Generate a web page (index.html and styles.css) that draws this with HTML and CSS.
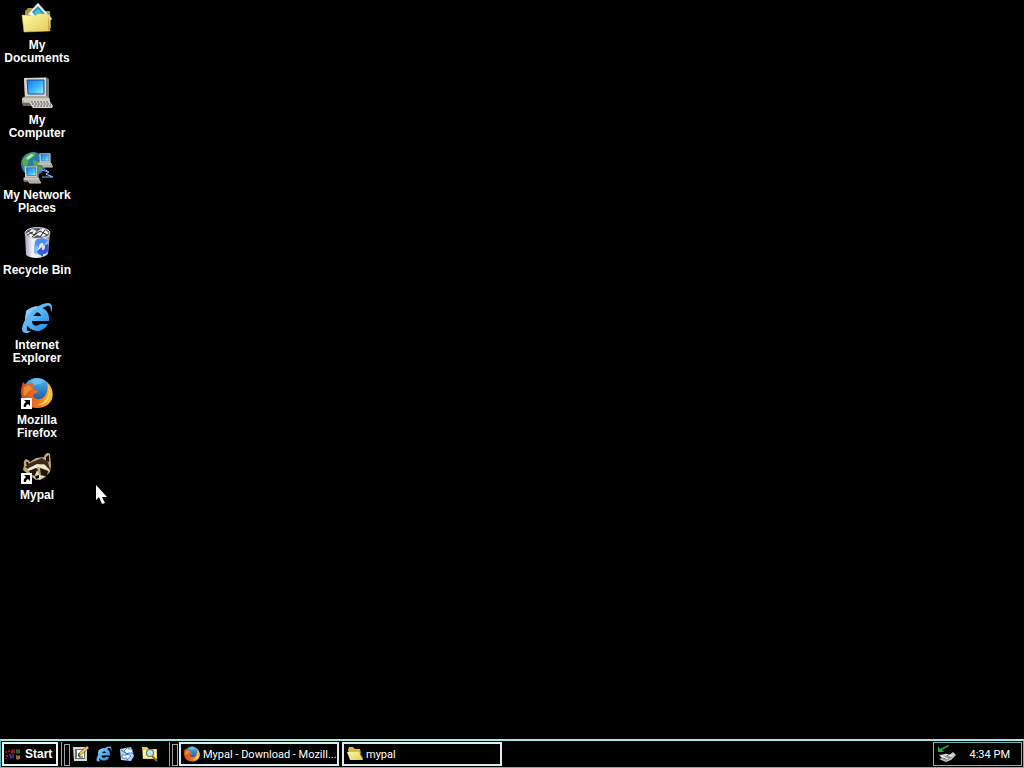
FILE: index.html
```html
<!DOCTYPE html>
<html lang="en">
<head>
<meta charset="utf-8">
<title>Desktop</title>
<link rel="stylesheet" href="styles.css">
</head>
<body>
<svg class="defs" aria-hidden="true">
  <defs>
    <linearGradient id="screen" x1="0" y1="0" x2="1" y2="1"><stop offset="0" stop-color="#1474e0"/><stop offset=".55" stop-color="#39b8ff"/><stop offset="1" stop-color="#a5f0ff"/></linearGradient>
    <linearGradient id="folder" x1="0" y1="0" x2="1" y2="1"><stop offset="0" stop-color="#fff9a8"/><stop offset="1" stop-color="#e2cb5c"/></linearGradient>
    <linearGradient id="bin" x1="0" x2="1"><stop offset="0" stop-color="#a9a6b8"/><stop offset=".3" stop-color="#f4f2fa"/><stop offset=".8" stop-color="#dddbe8"/><stop offset="1" stop-color="#8a879c"/></linearGradient>
    <linearGradient id="blue" x1="0" y1="0" x2="1" y2="1"><stop offset="0" stop-color="#9adcff"/><stop offset=".5" stop-color="#4dafF3"/><stop offset="1" stop-color="#2a83da"/></linearGradient>
    <linearGradient id="flame" x1="0" y1="0" x2="1" y2="0"><stop offset="0" stop-color="#d8481a"/><stop offset=".6" stop-color="#f07a1c"/><stop offset="1" stop-color="#ffc63a"/></linearGradient>
    <linearGradient id="globe" x1="0" y1="0" x2="0" y2="1"><stop offset="0" stop-color="#54b8ee"/><stop offset="1" stop-color="#123c8c"/></linearGradient>
    <symbol id="ie" viewBox="0 0 32 32">
      <path d="M15 5a12 12 0 1 0 12 17h-8c-3 3-8 2-8-3h17C29 10 24 5 15 5zM11 14c1-5 8-5 9 0z" fill="url(#blue)" fill-rule="evenodd"/>
      <path d="M30 11c2-6 1-10-3-10C16 1 2 16 1 27c0 5 5 5 10 2-4 1-6 0-5-4C8 17 17 7 26 4c3-1 4 1 4 7z" fill="#63b6f3"/>
      <path d="M5 9C8 6 13 4 18 4l-8 5-6 8z" fill="#8bcdf8"/>
    </symbol>
    <symbol id="firefox" viewBox="0 0 32 32">
      <circle cx="16" cy="15" r="14" fill="url(#globe)"/>
      <path d="M10 4c5-4 10-3 14 0l-5 3-6 1z" fill="#7accf5" opacity=".6"/>
      <path d="M2 5l3 3c2-1 5-2 8-1-2 2-2 4 0 6l4 1c-1 3-5 2-5 5 2 4 8 4 11 1 4-4 4-10 3-15 10 9 7 26-10 26C1 31-3 17 2 5z" fill="url(#flame)"/>
      <path d="M26 6c4 8 2 18-9 22 11 1 15-13 9-22z" fill="#ffe05a"/>
      <path d="M3 10l5-2 4 4-4 2-4 5c-2-2-2-6-1-9z" fill="#f08a32"/>
    </symbol>
    <symbol id="pc" viewBox="0 0 32 32">
      <path d="M3 1l22-1 3 2v19l-3 2H4z" fill="#77747c"/>
      <path d="M3 1h22v20H4z" fill="#ddd9ce"/>
      <path d="M6 3h17v14H7z" fill="url(#screen)" stroke="#174c91"/>
      <path d="M1 21l4-2h21l3 3v4H1z" fill="#aaa6a0"/>
      <path d="M1 22h27M3 24h10" stroke="#f2eddf"/>
      <path d="M8 26l2-3h18l4 6-1 2H12z" fill="#d3d0c9"/>
      <path d="M10 25h18M11 27h19M13 29h17" stroke="#5e5b5b" stroke-dasharray="2 1"/>
      <path d="M1 26h7l2 3H2z" fill="#6b6864"/>
    </symbol>
    <symbol id="shortcut" viewBox="0 0 11 11">
      <path d="M0 0h11v11H0z" fill="#fff"/>
      <path d="M3 2h6v6L7 6C5 7 5 8 5 9H3C2 7 3 6 5 4z" fill="#000"/>
    </symbol>
  </defs>
</svg>

<main class="desktop">
  <button class="shortcut">
    <svg class="icon" viewBox="0 0 32 32" aria-hidden="true">
      <path d="M4 9l3-3h7l3 3h12l1 17H4z" fill="#a99739"/>
      <path d="M7 12L17 1l14 16-8 5z" fill="#f5f7ff" stroke="#aab0c0" stroke-width=".5"/>
      <path d="M11 10l6-6 7 8-7 5z" fill="#2b94d0"/>
      <path d="M13 11l4-4 4 5-4 4z" fill="#54c5b5"/>
      <path d="M1 13l13 1 3-2h9l3 2 0 15-26 1z" fill="url(#folder)" stroke="#dfce64" stroke-width=".5"/>
      <path d="M27 13l2 15-2 1z" fill="#c5ab45"/>
    </svg>
    <span class="label">My Documents</span>
  </button>
  <button class="shortcut">
    <svg class="icon" viewBox="0 0 32 32" aria-hidden="true"><use href="#pc"/></svg>
    <span class="label">My Computer</span>
  </button>
  <button class="shortcut">
    <svg class="icon" viewBox="0 0 32 32" aria-hidden="true">
      <circle cx="12" cy="12" r="12" fill="#247bb7"/>
      <path d="M1 9C5 2 10 0 15 1l-2 4-5 2-1 5-4 4zM12 8l6 2 3 7-5 5-3-5z" fill="#54ad48"/>
      <path d="M5 6l5-4 3 1-6 5z" fill="#b0e899"/>
      <use href="#pc" x="17" y="1" width="15" height="15"/>
      <use href="#pc" x="2" y="14" width="18" height="18"/>
      <path d="M20 18l8 2-3 2 7 3H21M23 17l5 3M25 22l6 3" fill="none" stroke="#75b7ff"/>
    </svg>
    <span class="label">My Network Places</span>
  </button>
  <button class="shortcut">
    <svg class="icon" viewBox="0 0 32 32" aria-hidden="true">
      <path d="M4 6l1 22c5 4 17 4 22-1l2-20z" fill="url(#bin)"/>
      <ellipse cx="16.500" cy="6" rx="12.500" ry="5.500" fill="#5c5b60" stroke="#dedde8"/>
      <path d="M5 7l6-5 5 2 6-3 6 5-6 4-6-2-5 3z" fill="#efeff2"/>
      <path d="M7 4l6 4 5-6M11 10l8-6 7 4M19 10l5-7M6 8l6-3" fill="none" stroke="#29292d"/>
      <path d="M14 19c-1-6 2-8 6-7l-1-2 8 3-4 6-1-3c-3 0-4 1-4 4z" fill="#4b8ff0"/>
      <path d="M27 17c2 6-1 10-5 10v3l-7-5 6-5v3c3 0 3-2 3-5z" fill="#315bd7"/>
      <path d="M13 18l0 8 5 2-2-4 2-4z" fill="#7fb9ff"/>
    </svg>
    <span class="label">Recycle Bin</span>
  </button>
  <button class="shortcut">
    <svg class="icon" viewBox="0 0 32 32" aria-hidden="true"><use href="#ie"/></svg>
    <span class="label">Internet Explorer</span>
  </button>
  <button class="shortcut">
    <svg class="icon" viewBox="0 0 32 32" aria-hidden="true"><use href="#firefox"/><use href="#shortcut" y="21" width="11" height="11"/></svg>
    <span class="label">Mozilla Firefox</span>
  </button>
  <button class="shortcut">
    <svg class="icon" viewBox="0 0 32 32" aria-hidden="true">
      <path d="M3 13C2 7 6 5 9 10l6-4 8-1c1-4 4-5 6-3l1 11-1 7-6 6-8 2-8-6-5-4z" fill="#bfa979"/>
      <path d="M5 10l2 0 1 3-2 1zM25 5l3-2v7l-3-1z" fill="#17100c"/>
      <path d="M9 11l12-5 6 4 2 8-6-6-8 1-6 5-5-3z" fill="#3d2a1d"/>
      <path d="M8 16l8-4 8 1 5 6-5-2-7-2-6 3-5 0z" fill="#f2e9cc"/>
      <path d="M8 19l7-3 2 2-2 6-5-1zM19 16l8 3-1 5-6 0z" fill="#201711"/>
      <path d="M16 18l2 5 6 1-5 4-6-2z" fill="#e9ddbd"/>
      <path d="M14 24l4-1v3l-3 1z" fill="#100c09"/>
      <use href="#shortcut" y="21" width="11" height="11"/>
    </svg>
    <span class="label">Mypal</span>
  </button>
  <svg class="cursor" viewBox="0 0 11 19" aria-hidden="true"><path d="M0 0v15l3-3 3 7 3-1-3-6h5z" fill="#fff"/></svg>
</main>

<footer class="taskbar">
  <button class="start">
    <svg class="small" viewBox="0 0 16 16" aria-hidden="true">
      <path d="M0 5h2v2H0zM3 4h2v2H3zM1 9h2v2H1zM4 8h2v2H4zM6 4l4-1v4l-4 1zM0 12h2v1H0z" fill="#8f181c"/>
      <path d="M11 3c2 1 3 1 4 0v4c-2 1-3 1-4 0z" fill="#1d6c2c"/>
      <path d="M5 9l4-1v4l-4 1z" fill="#222f94"/>
      <path d="M11 9c2 1 3 1 4 0v4c-2 1-3 1-4 0z" fill="#93701c"/>
    </svg>
    Start
  </button>
  <span class="grip"></span>
  <nav class="quick" aria-label="Quick Launch">
    <button class="launch" aria-label="Show Desktop"><svg class="small" viewBox="0 0 16 16"><path d="M0 1h14v14H1z" fill="#d8ddd4"/><path d="M2 3h10v10H2z" fill="#5e766b"/><path d="M4 4h7v8H4z" fill="#fff"/><path d="M5 10l1-3 8-7 2 2-8 7z" fill="#f2c75a" stroke="#5c4521" stroke-width=".6"/><path d="M6 7v4h4" stroke="#26362e" fill="none"/></svg></button>
    <button class="launch" aria-label="Internet Explorer"><svg class="small" viewBox="0 0 32 32"><use href="#ie"/></svg></button>
    <button class="launch" aria-label="Outlook Express"><svg class="small" viewBox="0 0 16 16"><path d="M1 3l11-2 3 9-3 5-10-1z" fill="#b4d4f7"/><path d="M2 4l6 4 5-6" fill="none" stroke="#347ac5"/><path d="M5 5l4-4v2h4l1 4-5 0v2zM12 10l-4-3v2H3v3h5v2z" fill="#f3fbff" stroke="#286cb7" stroke-width=".7"/></svg></button>
    <button class="launch" aria-label="Search"><svg class="small" viewBox="0 0 16 16"><path d="M0 1h5l2 2h8v10H1z" fill="#e8ce60"/><path d="M1 4h13v8H1z" fill="#fff09a"/><circle cx="8" cy="7" r="3.500" fill="#b9e9f0" stroke="#667672" stroke-width="1.200"/><path d="M10 10l5 5" stroke="#8c6a27" stroke-width="2"/></svg></button>
  </nav>
  <span class="grip"></span>
  <div class="tasks">
    <button class="task"><svg class="small" viewBox="0 0 32 32" aria-hidden="true"><use href="#firefox"/></svg><span class="title">Mypal - Download - Mozill...</span></button>
    <button class="task"><svg class="small" viewBox="0 0 16 16" aria-hidden="true"><path d="M1 4l1-3h4l2 2h5v5H2z" fill="#d5bd4d"/><path d="M0 6h12l4 8H3z" fill="url(#folder)"/><path d="M13 4l1 5 2 4" fill="none" stroke="#978332"/></svg><span class="title">mypal</span></button>
  </div>
  <div class="tray">
    <svg class="device" viewBox="0 0 18 18" aria-hidden="true"><path d="M0 1v6h6L4 5l7-4-1-1-8 4z" fill="#2da63f"/><path d="M1 10l6-1 3 2 5-4 3 3-5 5-5 2-7-3 3-1z" fill="#c7cac7"/><path d="M3 13l6-2 6 1-7 4z" fill="#8d9491"/><path d="M7 9l7 2M3 11l7 3" stroke="#fff"/></svg>
    <time class="clock" datetime="16:34">4:34 PM</time>
  </div>
</footer>
</body>
</html>
```
FILE: styles.css
```css
* { box-sizing: border-box; }
body {
  margin: 0;
  min-height: 100vh;
  display: flex;
  flex-direction: column;
  background: #000;
  color: #fff;
  font: 11px/13px Roboto, sans-serif;
}
button {
  margin: 0;
  padding: 0;
  border: 0;
  background: none;
  color: inherit;
  font: inherit;
}
svg { display: block; flex: none; }
.defs { position: absolute; width: 0; height: 0; }
.desktop {
  position: relative;
  flex: 1;
  display: grid;
  grid-template-columns: 74px;
  grid-auto-rows: 75px;
  align-content: start;
}
.shortcut {
  display: flex;
  flex-direction: column;
  align-items: center;
  gap: 5px;
  padding-top: 2px;
  font: bold 12px/13px "Liberation Sans", Arial, sans-serif;
}
.icon { width: 32px; height: 32px; }
.cursor { position: absolute; left: 96px; top: 485px; width: 11px; height: 19px; }
.taskbar {
  display: flex;
  align-items: stretch;
  height: 29px;
  padding: 1px;
  border: 1px solid #62bdbb;
  border-top: 2px solid #a5e8e4;
}
.small { width: 16px; height: 16px; }
.start {
  display: flex;
  align-items: center;
  gap: 4px;
  width: 56px;
  padding: 0 1px;
  border: 2px solid #e8f8f6;
  font: bold 12px/13px "Liberation Sans", Arial, sans-serif;
}
.grip {
  width: 7px;
  margin-left: 3px;
  padding: 2px 0 2px 2px;
  border-left: 1px solid #9aa4a2;
}
.grip::after {
  content: "";
  display: block;
  width: 4px;
  height: 100%;
  border: 1px solid #9aa4a2;
}
.quick { display: flex; align-items: center; gap: 7px; padding: 0 8px 0 5px; }
.tasks { flex: 1; display: flex; gap: 3px; min-width: 0; padding-left: 3px; }
.task {
  display: flex;
  align-items: center;
  gap: 3px;
  flex: 0 1 160px;
  min-width: 0;
  padding-left: 3px;
  border: 2px solid #dceeec;
  text-align: left;
}
.title { overflow: hidden; white-space: nowrap; }
.tray {
  display: flex;
  align-items: center;
  gap: 14px;
  padding: 0 11px 0 4px;
  border: 1px solid #7fb5b2;
}
.device { width: 18px; height: 18px; }
```
